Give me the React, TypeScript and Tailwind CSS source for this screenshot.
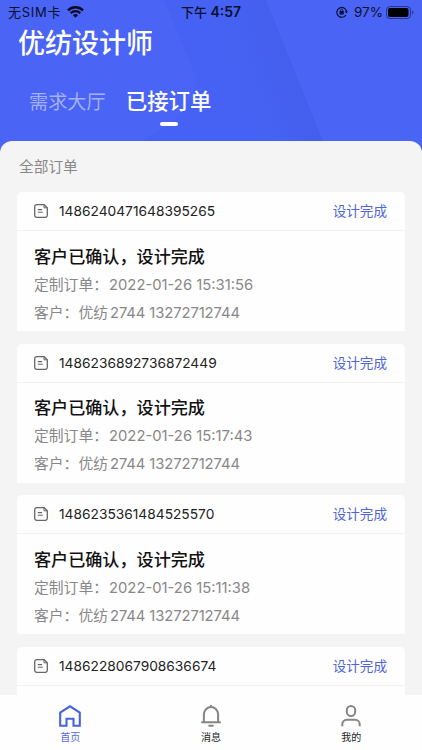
import React from 'react';

interface Order {
  id: string;
  time?: string;
}

const orders: Order[] = [
  { id: '1486240471648395265', time: '2022-01-26 15:31:56' },
  { id: '1486236892736872449', time: '2022-01-26 15:17:43' },
  { id: '1486235361484525570', time: '2022-01-26 15:11:38' },
  { id: '1486228067908636674' },
];

const WifiIcon = () => (
  <svg width="17" height="12" viewBox="0 0 17 12" fill="none" stroke="#080b22">
    <path d="M1 4.3a10.8 10.8 0 0 1 15 0" strokeWidth="2.5" />
    <path d="M3.7 7.1a7 7 0 0 1 9.6 0" strokeWidth="2.2" />
    <path d="M8.5 11.8 5.9 9.2a3.7 3.7 0 0 1 5.2 0Z" fill="#080b22" stroke="none" />
  </svg>
);

const RotationLockIcon = () => (
  <svg width="12" height="12" viewBox="0 0 12 12" fill="none" stroke="#0b1030" strokeWidth="1.2">
    <path d="M9.9 9A4.9 4.9 0 1 1 10.6 5.6" />
    <path d="M8.8 5.3h3.2l-1.6 2.2Z" fill="#0b1030" stroke="none" />
    <rect x="3.6" y="5.1" width="4.2" height="3.3" rx="0.4" fill="#0b1030" stroke="none" />
    <path d="M4.6 5.5V4.4a1.1 1.1 0 0 1 2.2 0v1.1" strokeWidth="0.9" />
  </svg>
);

const BatteryIcon = () => (
  <svg width="28" height="13" viewBox="0 0 28 13">
    <rect x="0.5" y="0.5" width="24" height="12" rx="3.4" fill="none" stroke="#0b1030" strokeOpacity="0.55" />
    <rect x="2" y="2" width="20.5" height="9" rx="2" fill="#000" />
    <path d="M26 4.4v4.2c.9-.4 1.4-1.2 1.4-2.1s-.5-1.7-1.4-2.1Z" fill="#0b1030" fillOpacity="0.5" />
  </svg>
);

const OrderIcon = () => (
  <svg width="14" height="14" viewBox="0 0 14 14" fill="none" stroke="#666" strokeWidth="1.3">
    <path d="M10.2.7H2.8A2.1 2.1 0 0 0 .7 2.8v8.4a2.1 2.1 0 0 0 2.1 2.1h8.4a2.1 2.1 0 0 0 2.1-2.1V3.8Z" />
    <path d="M10 .9v2.9h3" strokeWidth="1" />
    <path d="M3.8 5.6h4.3M3.8 8.2h5" strokeWidth="1.1" />
  </svg>
);

const HomeIcon = () => (
  <svg width="22" height="22" viewBox="0 0 22 22" fill="none" stroke="#4a62df" strokeWidth="2.1">
    <path d="M1.2 20.7V7.6L11 1.3l9.8 6.3v13.1h-6.3v-6.9h-7v6.9Z" />
  </svg>
);

const BellIcon = () => (
  <svg width="22" height="22" viewBox="0 0 22 22" fill="none" stroke="#858585" strokeWidth="2">
    <path d="M11 0v2.4M1.2 17.2h19.6M3.9 17V9.2a7.1 7.1 0 0 1 14.2 0V17M8.4 20.8h5.2" />
  </svg>
);

const UserIcon = () => (
  <svg width="22" height="22" viewBox="0 0 22 22" fill="none" stroke="#858585" strokeWidth="2">
    <rect x="6.8" y="1" width="8.4" height="10" rx="4.2" />
    <path d="M2.3 21.3v-2.1a4.4 4.4 0 0 1 4.4-4.4h8.6a4.4 4.4 0 0 1 4.4 4.4v2.1" />
  </svg>
);

const StatusBar = () => (
  <div className="flex h-[24px] items-center px-2 text-[13px] leading-none text-[#0b1030]">
    <div className="flex flex-1 items-center">
      <span className="mr-[6px] tracking-[0.7px]">无SIM卡</span>
      <WifiIcon />
    </div>
    <span className="whitespace-nowrap text-[14px] font-semibold">
      <span className="text-[13px] font-medium">下午</span> 4:57
    </span>
    <div className="flex flex-1 items-center justify-end">
      <RotationLockIcon />
      <span className="ml-[6px] mr-[3px] pt-[1px] text-[13.5px]">97%</span>
      <BatteryIcon />
    </div>
  </div>
);

const HeaderBackground = () => (
  <svg className="absolute inset-0" width="422" height="141" viewBox="0 0 422 141">
    <defs>
      <linearGradient id="band" gradientUnits="userSpaceOnUse" x1="190" y1="110" x2="300" y2="68">
        <stop offset="0" stopColor="#4562f5" />
        <stop offset="0.6" stopColor="#4562f3" />
        <stop offset="1" stopColor="#445eec" />
      </linearGradient>
    </defs>
    <path d="M164 0 190 63Q198 82 193 94C186 114 164 130 140 141H323L266 0Z" fill="url(#band)" />
  </svg>
);

const OrderCard: React.FC<{ order: Order }> = ({ order }) => (
  <div className="h-[139.2px] shrink-0 overflow-hidden rounded-t-[5px] bg-[#fefefe]">
    <div className="flex h-[39px] items-center border-b border-[#f2f2f2] pl-[17px] pr-[18px] pt-[0.5px]">
      <OrderIcon />
      <span className="ml-[11px] flex-1 text-[13.75px] text-[#222]">{order.id}</span>
      <span className="text-[13.6px] text-[#5065d8]">设计完成</span>
    </div>
    {order.time && (
      <div className="whitespace-nowrap px-[17px] pt-[11.5px]">
        <h3 className="text-[17.1px] font-medium leading-[28px] text-[#111]">客户已确认，设计完成</h3>
        <p className="text-[14.8px] leading-[28px] text-[#888]">
          定制订单：<span className="ml-[1px]">{order.time}</span>
        </p>
        <p className="text-[14.8px] leading-[28px] text-[#888]">
          客户：优纺<span className="ml-[2px] tracking-[-0.1px]">2744 13272712744</span>
        </p>
      </div>
    )}
  </div>
);

const App: React.FC = () => {
  return (
    <div className="flex h-[750px] w-[422px] flex-col overflow-hidden bg-[#4a64f5] font-[Inter,'Noto_Sans_CJK_SC',sans-serif]">
      {/* Header */}
      <header className="relative h-[141px] shrink-0">
        <HeaderBackground />
        <div className="relative">
          <StatusBar />
          <h1 className="pl-[18px] pt-[2px] text-[27px] font-medium leading-[36px] text-white">优纺设计师</h1>
          <div className="mt-[23px] flex pl-[29px] leading-[32px]">
            <span className="pt-[1px] text-[19.2px] text-[#a3b0fa]">需求大厅</span>
            <div className="ml-[20px] flex flex-col items-center text-white">
              <span className="text-[21.4px] font-medium">已接订单</span>
              <span className="mt-[5px] h-[4px] w-[18px] rounded-[2px] bg-white"></span>
            </div>
          </div>
        </div>
      </header>

      {/* Order list */}
      <main className="flex min-h-0 flex-1 flex-col overflow-hidden rounded-t-[12px] bg-[#f4f4f4] px-[17px]">
        <h2 className="h-[51px] shrink-0 pl-[2px] pt-[15px] text-[14.7px] leading-[22px] text-[#888]">全部订单</h2>
        <div className="flex flex-col gap-[12.4px]">
          {orders.map((order) => (
            <OrderCard key={order.id} order={order} />
          ))}
        </div>
      </main>

      {/* Tab bar */}
      <nav className="grid h-[55px] shrink-0 grid-cols-3 bg-[#fefefe] pt-[10px] text-[10px] leading-[15px] text-[#222]">
        <div className="flex flex-col items-center gap-[3px] text-[#5268e0]">
          <HomeIcon />
          <span>首页</span>
        </div>
        <div className="flex flex-col items-center gap-[3px]">
          <BellIcon />
          <span>消息</span>
        </div>
        <div className="flex flex-col items-center gap-[3px] pr-[1px]">
          <UserIcon />
          <span>我的</span>
        </div>
      </nav>
    </div>
  );
};

export default App;
